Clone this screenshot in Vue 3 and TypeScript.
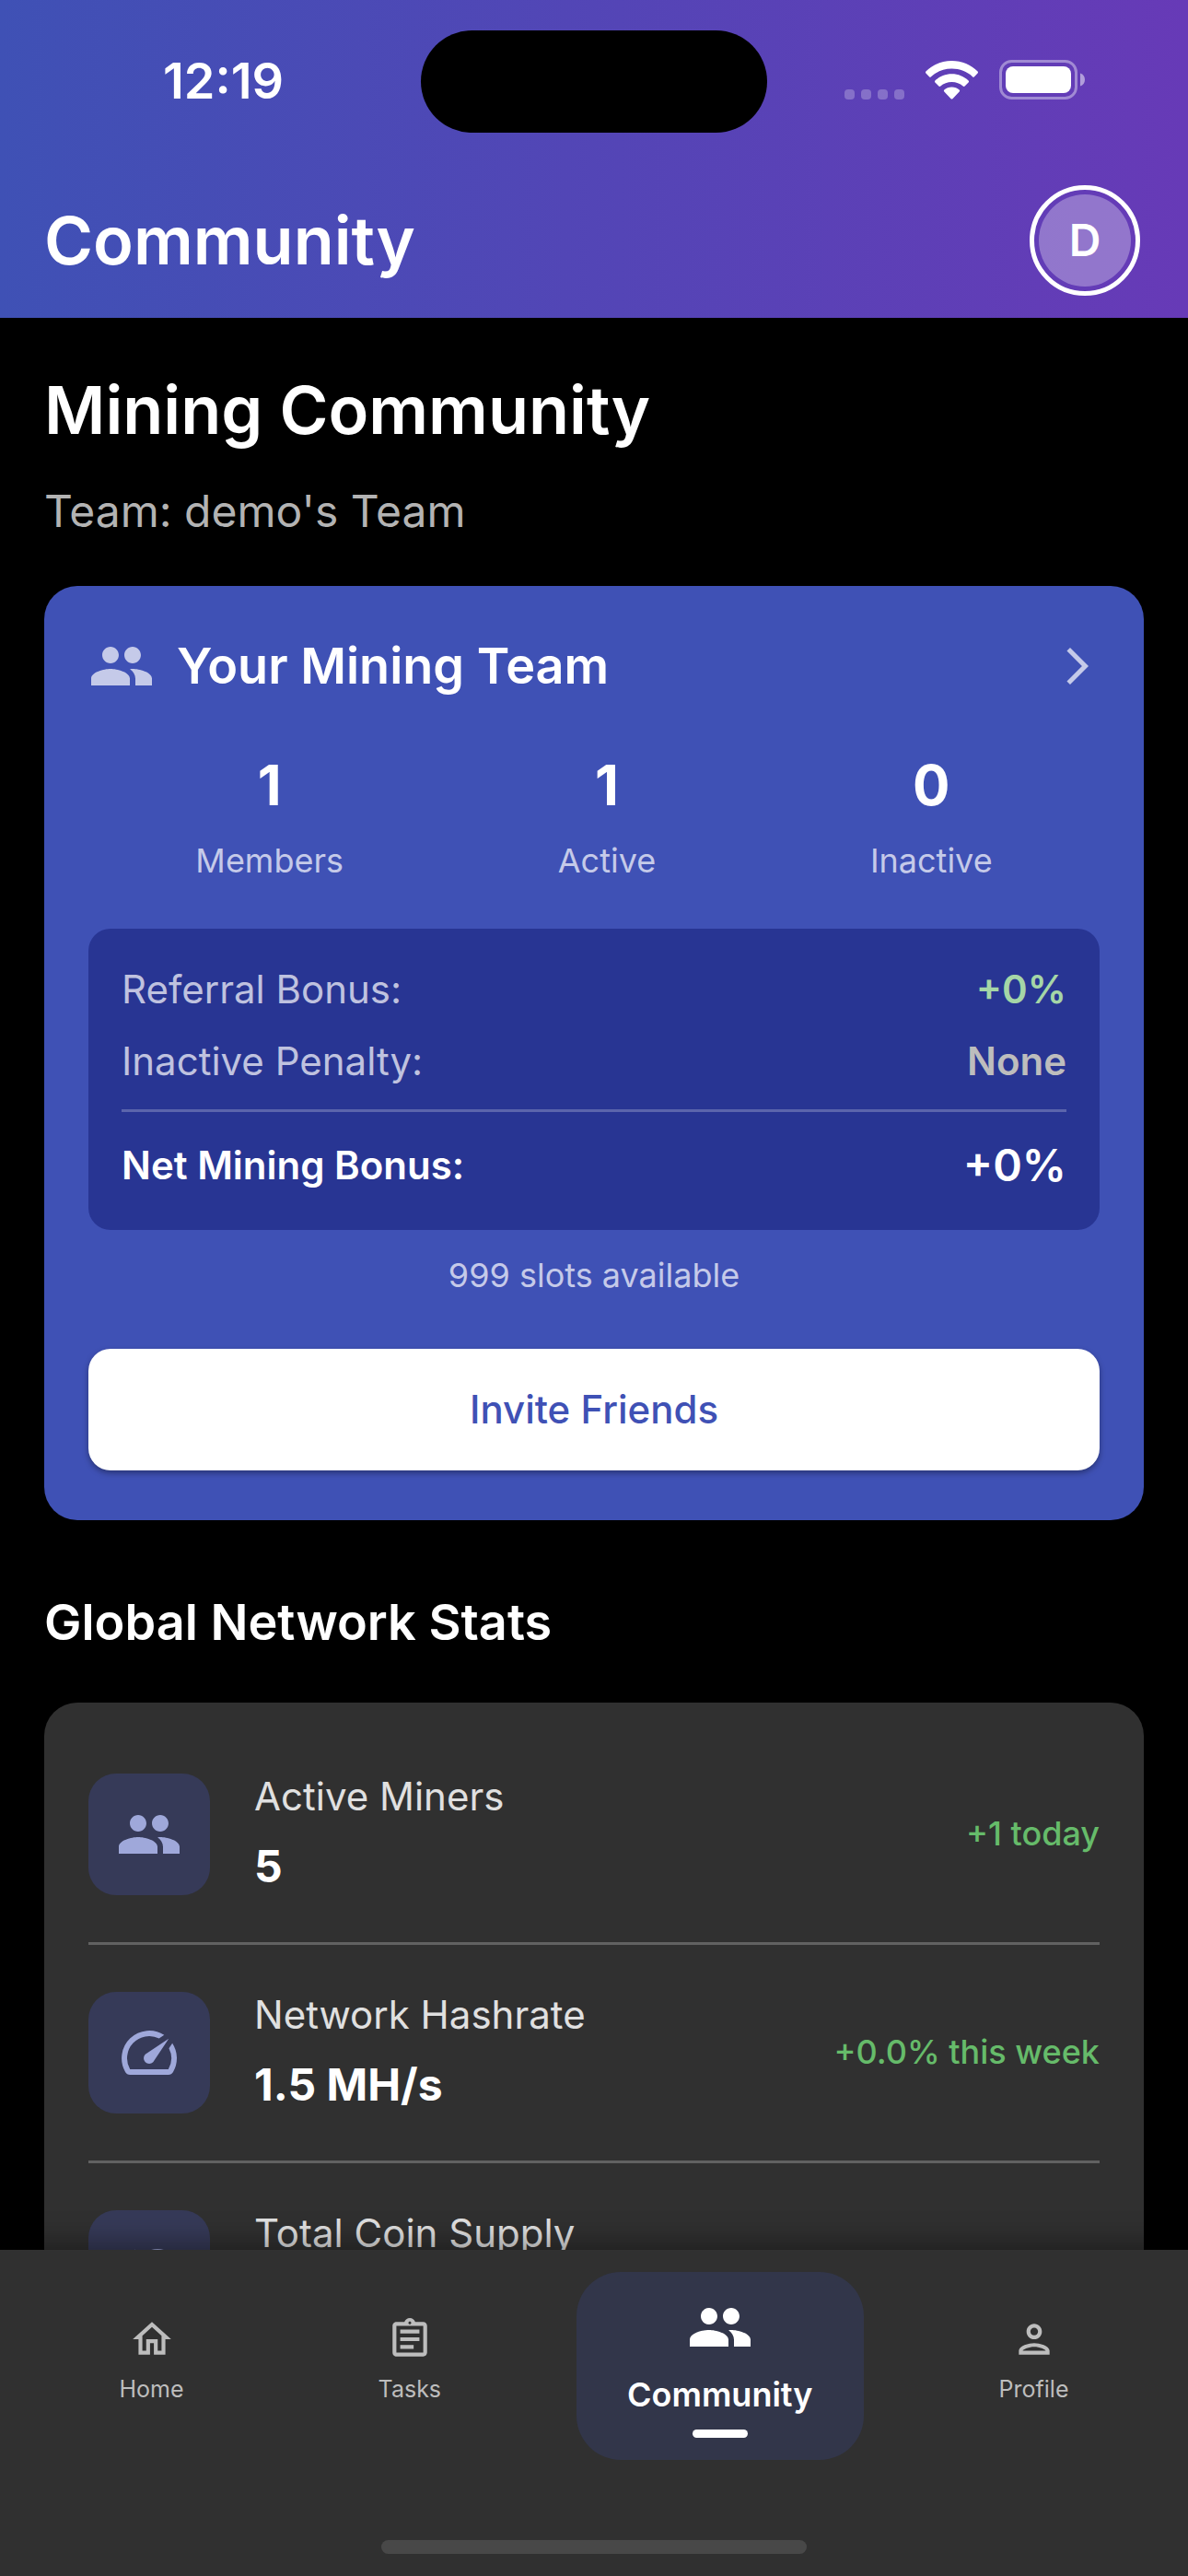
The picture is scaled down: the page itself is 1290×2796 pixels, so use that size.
<script setup lang="ts">
interface TeamStat {
  value: string
  label: string
}

interface NetworkStat {
  icon: string
  label: string
  value?: string
  change?: string
}

interface Tab {
  icon: string
  label: string
  active?: boolean
}

const icons: Record<string, string> = {
  people:
    'M16 11c1.66 0 2.99-1.34 2.99-3S17.66 5 16 5c-1.66 0-3 1.34-3 3s1.34 3 3 3zm-8 0c1.66 0 2.99-1.34 2.99-3S9.66 5 8 5C6.34 5 5 6.34 5 8s1.34 3 3 3zm0 2c-2.33 0-7 1.17-7 3.5V19h14v-2.5c0-2.33-4.67-3.5-7-3.5zm8 0c-.29 0-.62.02-.97.05 1.16.84 1.97 1.97 1.97 3.45V19h6v-2.5c0-2.33-4.67-3.5-7-3.5z',
  speed:
    'M20.38 8.57l-1.23 1.85a8 8 0 0 1-.22 7.58H5.07A8 8 0 0 1 15.58 6.85l1.85-1.23A10 10 0 0 0 3.35 19a2 2 0 0 0 1.72 1h13.85a2 2 0 0 0 1.74-1 10 10 0 0 0-.27-10.44zM10.59 15.41a2 2 0 0 0 2.83 0l5.66-8.49-8.49 5.66a2 2 0 0 0 0 2.83z',
  toll:
    'M15 4c-4.42 0-8 3.58-8 8s3.58 8 8 8 8-3.58 8-8-3.58-8-8-8zm0 14c-3.31 0-6-2.69-6-6s2.69-6 6-6 6 2.69 6 6-2.69 6-6 6zM3 12c0-2.61 1.67-4.83 4-5.65V4.26C3.55 5.15 1 8.27 1 12s2.55 6.85 6 7.74v-2.09c-2.33-.82-4-3.04-4-5.65z',
  home: 'M12 5.69l5 4.5V18h-2v-6H9v6H7v-7.81l5-4.5M12 3L2 12h3v8h6v-6h2v6h6v-8h3L12 3z',
  tasks:
    'M7 15h7v2H7zm0-4h10v2H7zm0-4h10v2H7zm12-4h-4.18C14.4 1.84 13.3 1 12 1s-2.4.84-2.82 2H5c-.14 0-.27.01-.4.04-.39.08-.74.28-1.01.55-.18.18-.33.4-.43.64-.1.23-.16.49-.16.77v14c0 .27.06.54.16.78s.25.45.43.64c.27.27.62.47 1.01.55.13.02.26.03.4.03h14c1.1 0 2-.9 2-2V5c0-1.1-.9-2-2-2zm-7-.25c.41 0 .75.34.75.75s-.34.75-.75.75-.75-.34-.75-.75.34-.75.75-.75zM19 19H5V5h14v14z',
  person:
    'M12 6c1.1 0 2 .9 2 2s-.9 2-2 2-2-.9-2-2 .9-2 2-2m0 10c2.7 0 5.8 1.29 6 2H6c.23-.72 3.31-2 6-2m0-12C9.79 4 8 5.79 8 8s1.79 4 4 4 4-1.79 4-4-1.79-4-4-4zm0 10c-2.67 0-8 1.34-8 4v2h16v-2c0-2.66-5.33-4-8-4z',
  forward: 'M6.23 20.23 8 22l10-10L8 2 6.23 3.77 14.46 12z',
}

const teamStats: TeamStat[] = [
  { value: '1', label: 'Members' },
  { value: '1', label: 'Active' },
  { value: '0', label: 'Inactive' },
]

const networkStats: NetworkStat[] = [
  { icon: 'people', label: 'Active Miners', value: '5', change: '+1 today' },
  { icon: 'speed', label: 'Network Hashrate', value: '1.5 MH/s', change: '+0.0% this week' },
  { icon: 'toll', label: 'Total Coin Supply' },
]

const tabs: Tab[] = [
  { icon: 'home', label: 'Home' },
  { icon: 'tasks', label: 'Tasks' },
  { icon: 'people', label: 'Community', active: true },
  { icon: 'person', label: 'Profile' },
]
</script>

<template>
  <div class="app">
    <header class="top">
      <div class="status">
        <div class="status-side clock">
          <span class="time">12:19</span>
        </div>
        <div class="island"></div>
        <div class="status-side indicators">
          <div class="cell"><i></i><i></i><i></i><i></i></div>
          <svg class="wifi" viewBox="0 0 57 42" aria-hidden="true">
            <path d="M28.500 0C39.500 0 49.500 4.300 56.600 11.600Q57.400 12.500 56.600 13.400L53 17.200Q52 18.200 51 17.200C45 11.600 37.200 8.600 28.500 8.600S12 11.600 6 17.200Q5 18.200 4 17.200L.4 13.400Q-.4 12.500.4 11.600C7.500 4.300 17.500 0 28.500 0Z" />
            <path d="M28.500 14.300C35.500 14.300 41.800 17 46.600 21.500Q47.500 22.500 46.600 23.400L42.600 27.500Q41.700 28.400 40.700 27.500C37.400 24.500 33.200 22.900 28.500 22.900S19.600 24.500 16.300 27.500Q15.300 28.400 14.400 27.500L10.400 23.400Q9.500 22.500 10.400 21.500C15.200 17 21.500 14.300 28.500 14.300Z" />
            <path d="M28.500 28.600C31.700 28.600 34.500 29.700 36.700 31.600Q37.700 32.500 36.700 33.500L29.400 41.200Q28.500 42 27.600 41.200L20.300 33.500Q19.300 32.500 20.300 31.600C22.500 29.700 25.300 28.600 28.500 28.600Z" />
          </svg>
          <svg class="battery" viewBox="0 0 94 43" aria-hidden="true">
            <rect x="1.500" y="1.500" width="82" height="40" rx="12" fill="none" stroke="#fff" stroke-opacity=".4" stroke-width="3" />
            <rect x="7" y="7" width="71" height="29" rx="8" />
            <path d="M88 14.500c3 1 5 3.500 5 7s-2 6-5 7z" fill-opacity=".5" />
          </svg>
        </div>
      </div>
      <div class="bar">
        <h1>Community</h1>
        <button class="avatar" type="button" aria-label="Account"><span>D</span></button>
      </div>
    </header>

    <main class="content">
      <h2 class="page-title">Mining Community</h2>
      <p class="team-name">Team: demo's Team</p>

      <section class="team-card">
        <div class="team-head">
          <svg class="icon" viewBox="0 0 24 24" aria-hidden="true"><path :d="icons.people" /></svg>
          <h3>Your Mining Team</h3>
          <svg class="chevron" viewBox="0 0 24 24" aria-hidden="true"><path :d="icons.forward" /></svg>
        </div>

        <div class="team-stats">
          <div v-for="stat in teamStats" :key="stat.label" class="team-stat">
            <strong>{{ stat.value }}</strong>
            <span>{{ stat.label }}</span>
          </div>
        </div>

        <div class="bonus">
          <div class="bonus-row">
            <span>Referral Bonus:</span>
            <b class="gain">+0%</b>
          </div>
          <div class="bonus-row">
            <span>Inactive Penalty:</span>
            <b class="muted">None</b>
          </div>
          <hr />
          <div class="bonus-row net">
            <span>Net Mining Bonus:</span>
            <b>+0%</b>
          </div>
        </div>

        <p class="slots">999 slots available</p>
        <button class="invite" type="button">Invite Friends</button>
      </section>

      <h3 class="section-title">Global Network Stats</h3>

      <section class="network-card">
        <div v-for="stat in networkStats" :key="stat.label" class="network-row">
          <div class="tile">
            <svg class="icon" viewBox="0 0 24 24" aria-hidden="true"><path :d="icons[stat.icon]" /></svg>
          </div>
          <div class="network-text">
            <span>{{ stat.label }}</span>
            <strong v-if="stat.value">{{ stat.value }}</strong>
          </div>
          <span v-if="stat.change" class="change">{{ stat.change }}</span>
        </div>
      </section>
    </main>

    <nav class="nav">
      <div class="tabs">
        <button
          v-for="tab in tabs"
          :key="tab.label"
          type="button"
          class="tab"
          :class="{ active: tab.active }"
          :aria-current="tab.active ? 'page' : undefined"
        >
          <svg viewBox="0 0 24 24" aria-hidden="true"><path :d="icons[tab.icon]" /></svg>
          <span>{{ tab.label }}</span>
        </button>
      </div>
      <div class="home-indicator"></div>
    </nav>
  </div>
</template>

<style>
body {
  margin: 0;
  background: #000;
}
</style>

<style scoped>
.app {
  display: flex;
  flex-direction: column;
  height: 100vh;
  background: #000;
  color: #fff;
  font-family: Inter, "Liberation Sans", sans-serif;
}

h1,
h2,
h3,
p {
  margin: 0;
}

button {
  border: 0;
  padding: 0;
  background: none;
  color: inherit;
  font: inherit;
}

svg {
  display: block;
  flex: none;
  fill: currentColor;
}

.icon {
  width: 72px;
  height: 72px;
}

/* Header */
.top {
  background: linear-gradient(90deg, #3f51b5, #673ab7);
}

.status {
  display: flex;
  align-items: flex-start;
  padding-top: 33px;
}

.status-side {
  display: flex;
  flex: 1;
  justify-content: center;
  padding-top: 32px;
}

.clock {
  padding-left: 28px;
}

.indicators {
  align-items: flex-end;
  gap: 23px;
  padding-right: 28px;
}

.time {
  font-size: 54px;
  font-weight: 600;
  line-height: 46px;
}

.island {
  width: 376px;
  height: 111px;
  border-radius: 56px;
  background: #000;
}

.cell {
  display: flex;
  gap: 7px;
}

.cell i {
  width: 11px;
  height: 11px;
  border-radius: 4px;
  background: rgba(255, 255, 255, 0.25);
}

.wifi {
  width: 57px;
  height: 42px;
}

.battery {
  width: 94px;
  height: 43px;
}

.bar {
  display: flex;
  align-items: center;
  justify-content: space-between;
  padding: 57px 52px 24px 48px;
}

.bar h1,
.page-title {
  font-size: 72px;
  font-weight: 600;
  line-height: 104px;
}

.avatar {
  box-sizing: border-box;
  width: 120px;
  height: 120px;
  padding: 5px;
  border: 5px solid #fff;
  border-radius: 50%;
}

.avatar span {
  display: block;
  border-radius: 50%;
  background: rgba(255, 255, 255, 0.3);
  font-size: 48px;
  font-weight: 600;
  line-height: 100px;
}

/* Scrolling content */
.content {
  flex: 1;
  min-height: 0;
  overflow-y: auto;
  padding: 48px 48px 0;
  scrollbar-width: none;
}

.team-name {
  margin: 24px 0 48px;
  color: #b3b3b3;
  font-size: 48px;
  line-height: 67px;
}

.team-card {
  padding: 48px 48px 54px;
  border-radius: 36px;
  background: #3f51b5;
}

.team-head {
  display: flex;
  align-items: center;
  gap: 24px;
  color: #c5cae9;
}

.team-head h3 {
  flex: 1;
  color: #fff;
}

.team-head h3,
.section-title {
  font-size: 54px;
  font-weight: 600;
  line-height: 78px;
}

.chevron {
  width: 48px;
  height: 48px;
}

.team-stats {
  display: flex;
  justify-content: space-around;
  margin: 48px 0;
}

.team-stat {
  display: flex;
  flex-direction: column;
  align-items: center;
  gap: 15px;
}

.team-stat strong {
  font-size: 60px;
  font-weight: 700;
  line-height: 84px;
}

.team-stat span,
.slots {
  color: #c5cae9;
  font-size: 36px;
  line-height: 51px;
}

.bonus {
  display: flex;
  flex-direction: column;
  gap: 18px;
  padding: 36px;
  border-radius: 24px;
  background: #283593;
}

.bonus-row {
  display: flex;
  align-items: center;
  justify-content: space-between;
  color: #bfc2df;
  font-size: 42px;
  line-height: 60px;
}

.bonus-row b {
  font-weight: 600;
}

.bonus-row .gain {
  color: #a5d6a7;
}

.bonus-row .muted {
  color: #bdbdbd;
}

.bonus hr {
  width: 100%;
  height: 3px;
  margin: 4px 0 5px;
  border: 0;
  background: rgba(255, 255, 255, 0.24);
}

.bonus-row.net {
  color: #fff;
  font-weight: 600;
}

.bonus-row.net b {
  font-size: 48px;
  line-height: 69px;
}

.slots {
  margin: 24px 0 54px;
  text-align: center;
}

.invite {
  display: block;
  width: 100%;
  border-radius: 24px;
  background: #fff;
  box-shadow: 0 3px 6px rgba(0, 0, 0, 0.35);
  color: #3f51b5;
  font-size: 42px;
  font-weight: 500;
  line-height: 132px;
}

.section-title {
  margin: 72px 0 48px;
}

.network-card {
  padding: 48px;
  border-radius: 36px;
  background: #303030;
}

.network-row {
  display: flex;
  align-items: center;
  gap: 48px;
  height: 189px;
}

.network-row + .network-row {
  padding-top: 22px;
  margin-top: 23px;
  border-top: 3px solid #616161;
}

.tile {
  padding: 30px;
  border-radius: 30px;
  background: #363a58;
  color: #9fa8da;
}

.network-text {
  display: flex;
  flex: 1;
  flex-direction: column;
  gap: 12px;
  min-height: 141px;
  color: #e0e0e0;
  font-size: 42px;
  line-height: 60px;
}

.network-text strong {
  color: #fff;
  font-size: 48px;
  font-weight: 700;
  line-height: 68px;
}

.change {
  color: #66bb6a;
  font-size: 36px;
  font-weight: 500;
  line-height: 51px;
}

/* Bottom navigation */
.nav {
  z-index: 1;
  padding: 24px;
  background: #303030;
  box-shadow: 0 -6px 30px rgba(0, 0, 0, 0.4);
}

.tabs {
  display: flex;
  align-items: center;
  justify-content: space-around;
  margin-bottom: 87px;
}

.tab {
  display: flex;
  flex-direction: column;
  align-items: center;
  gap: 11px;
  padding: 0 64px 12px;
  color: #bdbdbd;
  font-size: 25px;
  line-height: 36px;
}

.tab svg {
  width: 50px;
  height: 50px;
}

.tab.active {
  gap: 12px;
  padding: 24px 55px;
  border-radius: 48px;
  background: #32364a;
  color: #fff;
  font-size: 36px;
  font-weight: 600;
  line-height: 51px;
}

.tab.active svg {
  width: 72px;
  height: 72px;
}

.tab.active::after {
  width: 60px;
  height: 9px;
  border-radius: 5px;
  background: #fff;
  content: "";
}

.home-indicator {
  width: 462px;
  height: 15px;
  margin: 0 auto;
  border-radius: 8px;
  background: #484848;
}
</style>
